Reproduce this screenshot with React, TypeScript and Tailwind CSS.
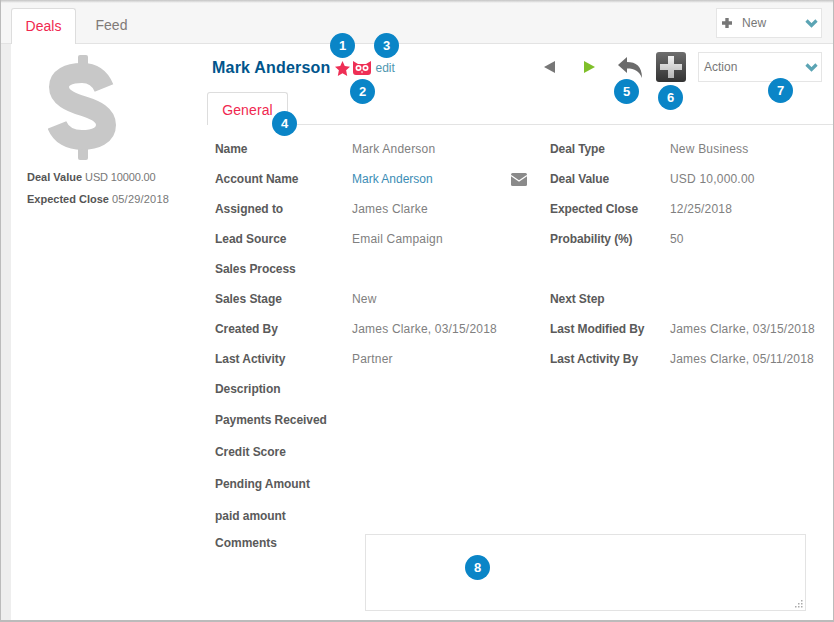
const rows = [
    { h: "h-[30px]", label: "Name", value: "Mark Anderson", label2: "Deal Type", value2: "New Business" },
    { h: "h-[30px]", label: "Account Name", value: "Mark Anderson", link: true, label2: "Deal Value", value2: "USD 10,000.00" },
    { h: "h-[30px]", label: "Assigned to", value: "James Clarke", label2: "Expected Close", value2: "12/25/2018" },
    { h: "h-[30px]", label: "Lead Source", value: "Email Campaign", label2: "Probability (%)", value2: "50" },
    { h: "h-[30px]", label: "Sales Process" },
    { h: "h-[30px]", label: "Sales Stage", value: "New", label2: "Next Step" },
    { h: "h-[30px]", label: "Created By", value: "James Clarke, 03/15/2018", label2: "Last Modified By", value2: "James Clarke, 03/15/2018" },
    { h: "h-[30px]", label: "Last Activity", value: "Partner", label2: "Last Activity By", value2: "James Clarke, 05/11/2018" },
    { h: "h-[30px]", label: "Description" },
    { h: "h-[32px]", label: "Payments Received" },
    { h: "h-[32px]", label: "Credit Score" },
    { h: "h-[32px]", label: "Pending Amount" },
    { h: "h-[32px]", label: "paid amount" },
];

const Badge = ({ n, className }: { n: number; className: string }) => (
    <span className={"absolute z-10 flex h-[25px] w-[25px] items-center justify-center rounded-full bg-[#0a85c7] text-[13px] font-bold text-white " + className}>
        {n}
    </span>
);

const Star = () => (
    <svg width="15" height="15" viewBox="0 0 24 24" className="block" fill="#ee2f55">
        <path d="M12 0 L15.6 8 L24 9 L17.8 14.9 L19.5 24 L12 19.5 L4.5 24 L6.2 14.9 L0 9 L8.4 8 Z" />
    </svg>
);

const Owl = () => (
    <svg width="18" height="14" viewBox="0 0 18 14" className="block">
        <path d="M0 0 L5 3 H13 L18 0 V11 Q18 14 15 14 H3 Q0 14 0 11 Z" fill="#ee2f55" />
        <circle cx="5.5" cy="7" r="3" fill="#fff" />
        <circle cx="12.5" cy="7" r="3" fill="#fff" />
        <circle cx="5.5" cy="7" r="1.3" fill="#ee2f55" />
        <circle cx="12.5" cy="7" r="1.3" fill="#ee2f55" />
        <path d="M8 10.5 H10 L9 12.5 Z" fill="#fff" />
    </svg>
);

const Dollar = () => (
    <svg width="68" height="105" viewBox="0 0 68 105" className="block">
        <rect x="30" y="0" width="10" height="14" rx="2" fill="#c8c8c8" />
        <rect x="30" y="91" width="10" height="14" rx="2" fill="#c8c8c8" />
        <path
            d="M56 33 C52 23 45 18 34 18 C20 18 11 23 11 32 C11 42 22 47 35 51 C48 55 58 60 58 70 C58 80 48 85 34 85 C22 85 13 80 9 70"
            fill="none"
            stroke="#c8c8c8"
            strokeWidth="20"
        />
    </svg>
);

const Mail = () => (
    <svg width="16" height="13" viewBox="0 0 16 13" className="block">
        <rect width="16" height="13" rx="1.5" fill="#8a8a8a" />
        <path d="M0 2.5 L8 8 L16 2.5" fill="none" stroke="#fff" strokeWidth="1.2" />
    </svg>
);

const Reply = () => (
    <svg width="24" height="21" viewBox="0 0 24 21" className="block">
        <path d="M0 8 L9 0 V5 C18 5 24 9 24 21 C21 14 17 11.5 9 11.5 V16 Z" fill="#6b6b6b" />
    </svg>
);

const Chevron = () => (
    <svg width="13" height="9" viewBox="0 0 13 9" className="block">
        <path d="M1.5 1.5 L6.5 6.5 L11.5 1.5" fill="none" stroke="#5ba4b4" strokeWidth="3.2" />
    </svg>
);

const SmallPlus = () => (
    <svg width="10" height="10" viewBox="0 0 10 10" className="block">
        <path d="M3.3 0 H6.7 V3.3 H10 V6.7 H6.7 V10 H3.3 V6.7 H0 V3.3 H3.3 Z" fill="#777777" />
    </svg>
);

const BigPlus = () => (
    <svg width="22" height="22" viewBox="0 0 22 22" className="block">
        <defs>
            <linearGradient id="plusFill" x1="0" y1="0" x2="0" y2="1">
                <stop offset="0" stopColor="#f2f2f2" />
                <stop offset="1" stopColor="#b4b4b4" />
            </linearGradient>
        </defs>
        <path d="M8 0 H14 V8 H22 V14 H14 V22 H8 V14 H0 V8 H8 Z" fill="url(#plusFill)" />
    </svg>
);

const Grip = () => (
    <svg width="9" height="9" viewBox="0 0 9 9" className="absolute bottom-[3px] right-[3px]">
        <rect x="7" y="1" width="1.5" height="1.5" fill="#aaaaaa" />
        <rect x="4" y="4" width="1.5" height="1.5" fill="#aaaaaa" />
        <rect x="7" y="4" width="1.5" height="1.5" fill="#aaaaaa" />
        <rect x="1" y="7" width="1.5" height="1.5" fill="#aaaaaa" />
        <rect x="4" y="7" width="1.5" height="1.5" fill="#aaaaaa" />
        <rect x="7" y="7" width="1.5" height="1.5" fill="#aaaaaa" />
    </svg>
);

export default function App() {
    return (
        <div className="relative flex h-[622px] w-[834px] flex-col overflow-hidden border-x border-b-2 border-[#bbbbbb] bg-[#eeeeee] text-[12px] [font-family:'Liberation_Sans',Arial,sans-serif]">
            <div className="h-[3px] shrink-0 bg-gradient-to-b from-[#c4c4c4] to-[#f6f6f6]" />
            <div className="flex h-[41px] shrink-0 items-start justify-between border-b border-[#e3e3e3] bg-[#f6f6f6] pl-[10px] pr-[11px] pt-[5px]">
                <div className="flex">
                    <div className="z-10 h-[36px] w-[65px] rounded-t-[3px] border border-b-0 border-[#dddddd] bg-white pt-[7px] text-center text-[14px] text-[#f0284f]">Deals</div>
                    <div className="w-[71px] pt-[7px] text-center text-[14px] text-[#807a78]">Feed</div>
                </div>
                <div className="flex h-[30px] w-[106px] items-center border border-[#e5e5e5] bg-white pl-[5px] pr-[3px] tracking-[0.1px] text-[#777777]">
                    <SmallPlus />
                    <span className="ml-[10px] flex-1">New</span>
                    <Chevron />
                </div>
            </div>

            <div className="ml-[10px] flex flex-1 bg-white">
                <div className="w-[196px] shrink-0">
                    <div className="ml-[37px] mt-[11px]">
                        <Dollar />
                    </div>
                    <div className="ml-[16px] mt-[6px] text-[11px] leading-[22px] text-[#777777]">
                        <p><b className="text-[#555555]">Deal Value</b> <span className="tracking-[-0.15px]">USD 10000.00</span></p>
                        <p><b className="text-[#555555]">Expected Close</b> <span className="tracking-[0.2px]">05/29/2018</span></p>
                    </div>
                </div>

                <div className="min-w-0 flex-1">
                    <div className="flex h-[48px] items-start">
                        <div className="ml-[5px] mt-[14px] flex items-center">
                            <span className="text-[16px] font-bold leading-[20px] tracking-[0.2px] text-[#00558c]">Mark Anderson</span>
                            <span className="ml-[5px]"><Star /></span>
                            <span className="ml-[3px]"><Owl /></span>
                            <span className="ml-[4px] text-[#4f97b0]">edit</span>
                        </div>
                        <div className="ml-auto mr-[11px] mt-[8px] flex items-center">
                            <span className="h-0 w-0 border-y-[6px] border-r-[11px] border-y-transparent border-r-[#777777]" />
                            <span className="ml-[29px] h-0 w-0 border-y-[6px] border-l-[11px] border-y-transparent border-l-[#7fbf2a]" />
                            <span className="ml-[23px]"><Reply /></span>
                            <span className="ml-[14px] flex h-[30px] w-[30px] items-center justify-center rounded-[3px] bg-gradient-to-b from-[#6e6e6e] to-[#333333]">
                                <BigPlus />
                            </span>
                            <div className="ml-[12px] flex h-[30px] w-[124px] items-center justify-between border border-[#e5e5e5] pl-[5px] pr-[3px] text-[#777777]">
                                Action
                                <Chevron />
                            </div>
                        </div>
                    </div>

                    <div className="flex h-[33px] items-end border-b border-[#e3e3e3]">
                        <div className="-mb-px h-[33px] w-[81px] rounded-t-[3px] border border-b-0 border-[#dddddd] bg-white pt-[7px] text-center text-[14px] tracking-[0.1px] text-[#f0284f]">General</div>
                    </div>

                    <div className="pl-[8px] pt-[9px]">
                        {rows.map((r) => (
                            <div key={r.label} className={"grid grid-cols-[137px_198px_120px_1fr] items-center " + r.h}>
                                <span className="font-bold tracking-[-0.05px] text-[#5a5a5a]">{r.label}</span>
                                <span className={"flex items-center justify-between pr-[23px] " + (r.link ? "text-[#3c8db5]" : "tracking-[0.2px] text-[#808080]")}>
                                    {r.value}
                                    {r.link && <Mail />}
                                </span>
                                <span className="font-bold tracking-[-0.1px] text-[#5a5a5a]">{r.label2}</span>
                                <span className="tracking-[0.2px] text-[#808080]">{r.value2}</span>
                            </div>
                        ))}
                        <div className="flex pt-[2px]">
                            <span className="w-[150px] font-bold leading-[18px] text-[#5a5a5a]">Comments</span>
                            <div className="relative h-[77px] w-[441px]">
                                <textarea className="block h-full w-full resize-none border border-[#e3e3e3] bg-white outline-none" />
                                <Grip />
                            </div>
                        </div>
                    </div>
                </div>
            </div>

            <Badge n={1} className="left-[329px] top-[33px]" />
            <Badge n={2} className="left-[349px] top-[79px]" />
            <Badge n={3} className="left-[373px] top-[33px]" />
            <Badge n={4} className="left-[271px] top-[111px]" />
            <Badge n={5} className="left-[613px] top-[79px]" />
            <Badge n={6} className="left-[657px] top-[85px]" />
            <Badge n={7} className="left-[767px] top-[78px]" />
            <Badge n={8} className="left-[464px] top-[555px]" />
        </div>
    );
}
